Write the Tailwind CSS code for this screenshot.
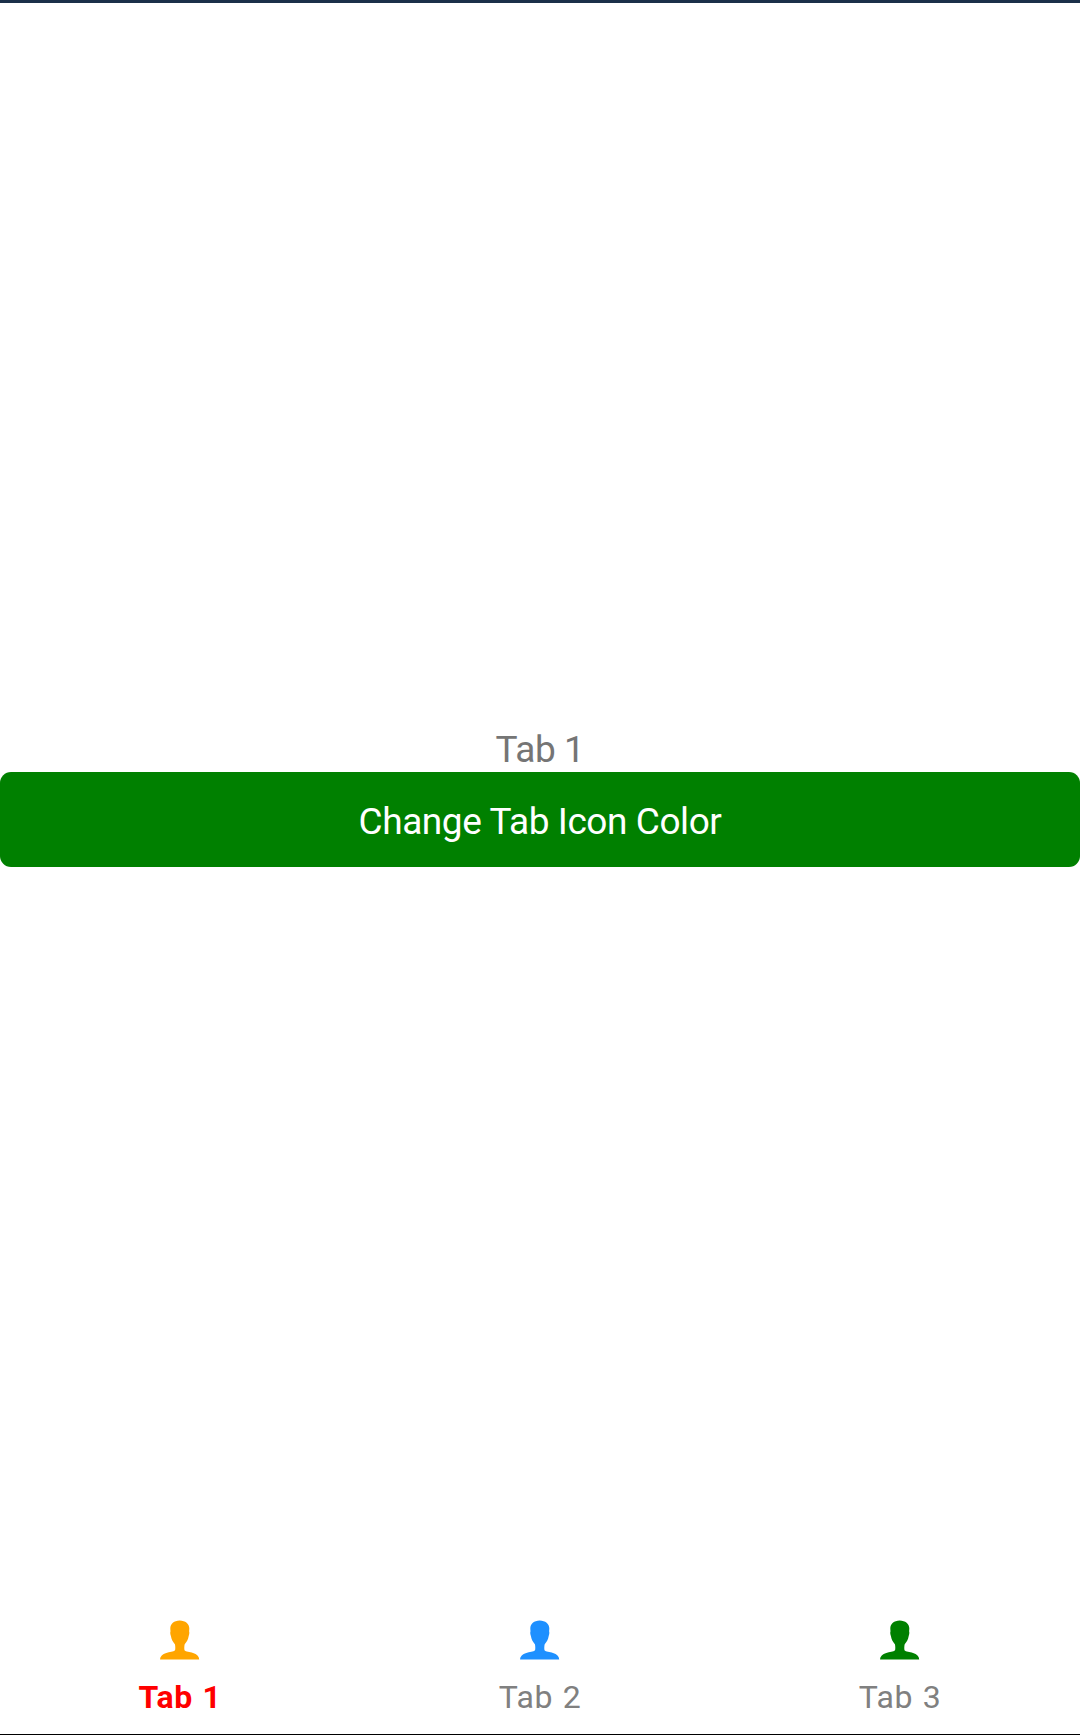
<!DOCTYPE html>
<html lang="en">
<head>
<meta charset="utf-8">
<title>Tabs</title>
<script src="https://cdn.jsdelivr.net/npm/@tailwindcss/browser@4"></script>
</head>
<body class="flex h-[1735px] w-[1080px] flex-col overflow-hidden border-t-3 border-b border-t-[#1b3049] border-b-black bg-white font-['Roboto',sans-serif]">
  <svg class="hidden">
    <symbol id="person" viewBox="0 0 40 40">
      <path d="M19.700.400C14 .400 10.300 4 10.300 8.300c0 1.200.1 2 .2 2.900-.5 1.300-.2 3.200.4 4.700.5 3.300 2.200 6.300 4 8.300.5 2 .5 4.500.2 6.100C13.500 31.800 9.500 32 6.300 33 2.500 34.200.100 36.300.100 39.600h39.100c0-3.300-2.400-5.400-6.200-6.600-3.200-1-7.200-1.200-8.500-2.700-.3-1.600-.3-4.100.2-6.100 1.800-2 3.500-5 4-8.300.6-1.500.9-3.400.4-4.700.1-.9.2-1.700.2-2.900C29.300 4 25.400.400 19.700.400z" fill="currentColor"/>
    </symbol>
  </svg>
  <main class="flex flex-1 flex-col pt-[723px]">
    <p class="h-[46px] text-center text-[37px] leading-[47px] tracking-[-0.4px] text-[#757575]">Tab 1</p>
    <button class="h-[95px] w-full rounded-[11px] bg-[#008000] pt-1 text-[37px] leading-[47px] tracking-[-0.43px] text-white">Change Tab Icon Color</button>
  </main>
  <nav class="grid h-[114px] grid-cols-3 text-[32px] leading-10 tracking-[0.6px] [word-spacing:1px] text-[#808080]">
    <a class="flex flex-col items-center gap-[17px]"><svg class="size-10 text-[#ffa500]"><use href="#person"/></svg><span class="font-bold text-[#ff0000]">Tab 1</span></a>
    <a class="flex flex-col items-center gap-[17px]"><svg class="size-10 text-[#1e90ff]"><use href="#person"/></svg><span>Tab 2</span></a>
    <a class="flex flex-col items-center gap-[17px]"><svg class="size-10 text-[#008000]"><use href="#person"/></svg><span>Tab 3</span></a>
  </nav>
</body>
</html>
